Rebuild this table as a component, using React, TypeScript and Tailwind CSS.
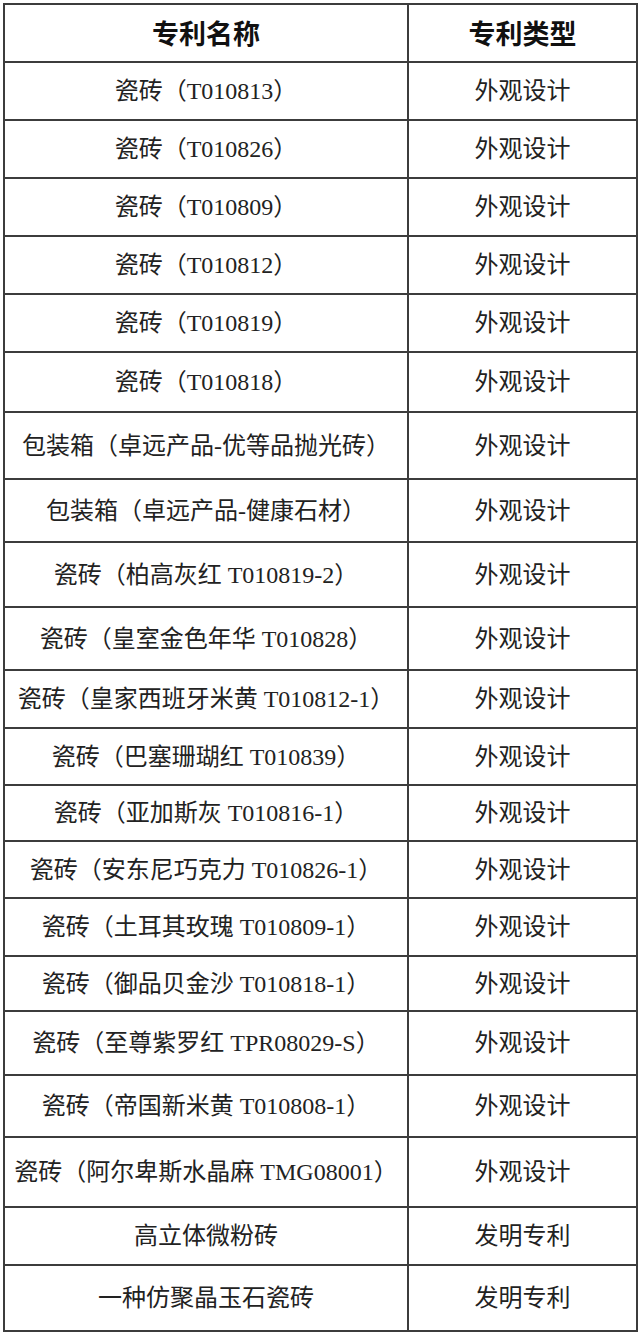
const ROWS: { name: string; type: string; h: string }[] = [
  { name: "瓷砖（T010813）", type: "外观设计", h: "h-[58px]" },
  { name: "瓷砖（T010826）", type: "外观设计", h: "h-[58px]" },
  { name: "瓷砖（T010809）", type: "外观设计", h: "h-[58px]" },
  { name: "瓷砖（T010812）", type: "外观设计", h: "h-[58px]" },
  { name: "瓷砖（T010819）", type: "外观设计", h: "h-[58px]" },
  { name: "瓷砖（T010818）", type: "外观设计", h: "h-[60px]" },
  { name: "包装箱（卓远产品-优等品抛光砖）", type: "外观设计", h: "h-[67px]" },
  { name: "包装箱（卓远产品-健康石材）", type: "外观设计", h: "h-[63px]" },
  { name: "瓷砖（柏高灰红 T010819-2）", type: "外观设计", h: "h-[65px]" },
  { name: "瓷砖（皇室金色年华 T010828）", type: "外观设计", h: "h-[63px]" },
  { name: "瓷砖（皇家西班牙米黄 T010812-1）", type: "外观设计", h: "h-[58px]" },
  { name: "瓷砖（巴塞珊瑚红 T010839）", type: "外观设计", h: "h-[57px]" },
  { name: "瓷砖（亚加斯灰 T010816-1）", type: "外观设计", h: "h-[56px]" },
  { name: "瓷砖（安东尼巧克力 T010826-1）", type: "外观设计", h: "h-[57px]" },
  { name: "瓷砖（土耳其玫瑰 T010809-1）", type: "外观设计", h: "h-[58px]" },
  { name: "瓷砖（御品贝金沙 T010818-1）", type: "外观设计", h: "h-[55px]" },
  { name: "瓷砖（至尊紫罗红 TPR08029-S）", type: "外观设计", h: "h-[64px]" },
  { name: "瓷砖（帝国新米黄 T010808-1）", type: "外观设计", h: "h-[62px]" },
  { name: "瓷砖（阿尔卑斯水晶麻 TMG08001）", type: "外观设计", h: "h-[70px]" },
  { name: "高立体微粉砖", type: "发明专利", h: "h-[58px]" },
  { name: "一种仿聚晶玉石瓷砖", type: "发明专利", h: "h-[66px]" },
];

export default function App() {
  return (
    <div className="w-[640px] h-[1333px] bg-white pt-[3px] pl-[3px]">
      <div className="w-[635px] border-t-2 border-l-2 border-r-2 border-[#3c3c3c] text-[#222] font-['Liberation_Serif','Noto_Sans_CJK_SC',serif]">
        {/* header */}
        <div className="flex h-[58px] border-b-2 border-[#3c3c3c] text-[27px] font-bold text-[#111] font-['Noto_Sans_CJK_SC',sans-serif]">
          <div className="w-[404px] border-r-2 border-[#3c3c3c] flex items-center justify-center">
            专利名称
          </div>
          <div className="flex-1 flex items-center justify-center">专利类型</div>
        </div>
        {ROWS.map((r) => (
          <div key={r.name} className={`flex border-b-2 border-[#3c3c3c] text-[24px] ${r.h}`}>
            <div className="w-[404px] border-r-2 border-[#3c3c3c] flex items-center justify-center whitespace-nowrap">
              {r.name}
            </div>
            <div className="flex-1 flex items-center justify-center">{r.type}</div>
          </div>
        ))}
      </div>
    </div>
  );
}
